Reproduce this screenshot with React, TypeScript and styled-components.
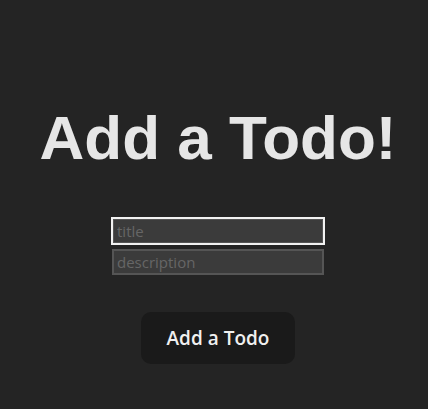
import React from "react";
import styled, { createGlobalStyle } from "styled-components";

const Global = createGlobalStyle`
  html, body { margin: 0; padding: 0; background: #242424; }
  body { font-family: "Liberation Sans", Arial, sans-serif; color: rgba(255,255,255,0.87); }
  #root { min-height: 409px; }
`;

const Page = styled.div`
  height: 409px;
  display: flex;
  flex-direction: column;
  align-items: center;
  padding-left: 8px;
  box-sizing: border-box;
`;

const Title = styled.h1`
  margin: 98px 0 0 0;
  font-family: "Liberation Sans", Arial, sans-serif;
  font-weight: 700;
  font-size: 62px;
  line-height: 80px;
  color: #e6e6e6;
`;

const Form = styled.div`
  margin-top: 40px;
  display: flex;
  flex-direction: column;
  gap: 5px;
`;

const Field = styled.input<{ $focused?: boolean }>`
  width: 212px;
  height: 26px;
  box-sizing: border-box;
  background: #3b3b3b;
  border: 2px solid #555;
  outline: ${(p) => (p.$focused ? "2px solid #f2f2f2" : "none")};
  outline-offset: -1px;
  padding: 0 3px;
  font-family: "Open Sans", "Liberation Sans", sans-serif;
  font-size: 15px;
  color: #ddd;
  &::placeholder { color: #666; }
`;

const Button = styled.button`
  margin-top: 37px;
  width: 154px;
  height: 52px;
  border: none;
  border-radius: 10px;
  background: #1a1a1a;
  color: #f0f0f0;
  font-family: "Open Sans", "Liberation Sans", sans-serif;
  font-weight: 600;
  font-size: 19px;
  cursor: pointer;
`;

export default function App() {
  return (
    <>
      <Global />
      <Page>
        <Title>Add a Todo!</Title>
        <Form>
          <Field $focused placeholder="title" />
          <Field placeholder="description" />
        </Form>
        <Button>Add a Todo</Button>
      </Page>
    </>
  );
}
